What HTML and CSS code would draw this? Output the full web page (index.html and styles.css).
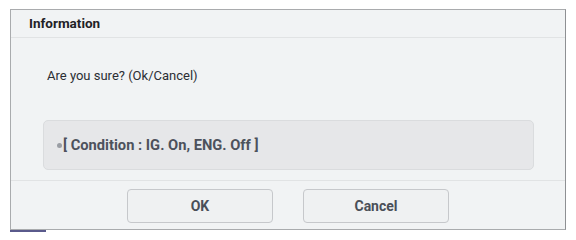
FILE: index.html
```html
<!DOCTYPE html>
<html>
<head>
<meta charset="utf-8">
<link rel="stylesheet" href="styles.css">
</head>
<body>
<div class="dialog">
  <div class="dialog-header">Information</div>
  <div class="dialog-body">
    <p class="message">Are you sure? (Ok/Cancel)</p>
    <div class="condition"><span class="bullet"></span>[ Condition : IG. On, ENG. Off ]</div>
  </div>
  <div class="dialog-footer">
    <button class="btn">OK</button>
    <button class="btn">Cancel</button>
  </div>
</div>
<div class="accent"></div>
</body>
</html>
```
FILE: styles.css
```css
html, body {
  margin: 0;
  padding: 0;
  background: #ffffff;
  font-family: Roboto, "Liberation Sans", sans-serif;
}
.dialog {
  box-sizing: border-box;
  width: 556px;
  margin: 9px 0 0 10px;
  border: 1px solid #a9abad;
  border-right-color: #8e9093;
  background: #f1f3f4;
}
.dialog-header {
  height: 27px;
  line-height: 27px;
  padding-left: 18px;
  border-bottom: 1px solid #e1e3e4;
  font-size: 13.5px;
  font-weight: 700;
  color: #1f2226;
}
.dialog-body {
  padding: 28px 31px 10px 32px;
}
.message {
  margin: 0;
  height: 20px;
  line-height: 20px;
  font-size: 13px;
  color: #2b2e33;
  padding-left: 4px;
}
.condition {
  box-sizing: border-box;
  margin-top: 34px;
  height: 50px;
  border: 1px solid #dadcde;
  border-radius: 5px;
  background: #e6e7e9;
  display: flex;
  align-items: center;
  padding-left: 13px;
  font-size: 14.7px;
  font-weight: 700;
  color: #4d525c;
}
.bullet {
  width: 5px;
  height: 5px;
  border-radius: 50%;
  background: #9a9ea4;
  margin-right: 1px;
}
.dialog-footer {
  border-top: 1px solid #e1e3e4;
  display: flex;
  justify-content: center;
  gap: 30px;
  padding: 8px 0 6px;
}
.btn {
  box-sizing: border-box;
  width: 146px;
  height: 34px;
  border: 1px solid #c6c8cb;
  border-radius: 4px;
  background: #eff1f2;
  font-family: Roboto, "Liberation Sans", sans-serif;
  font-size: 14px;
  font-weight: 700;
  color: #4a4f58;
  padding: 0;
}
.accent {
  width: 36px;
  height: 2px;
  margin-left: 10px;
  background: #5a5a8c;
}
```
